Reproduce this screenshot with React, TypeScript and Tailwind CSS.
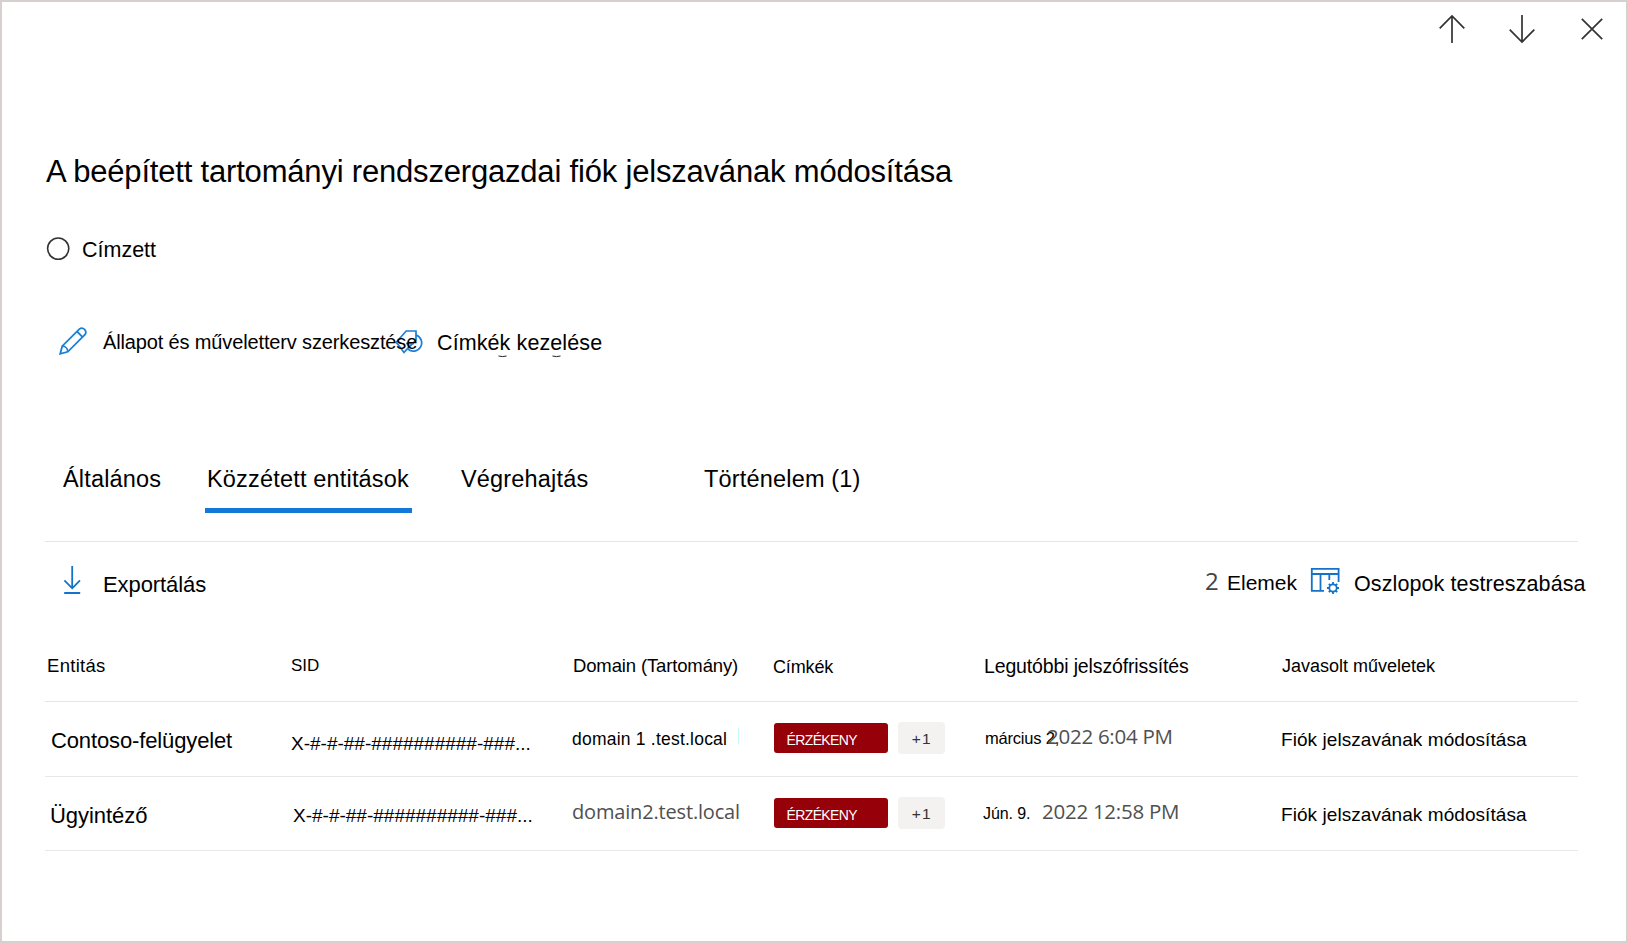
import { useState } from 'react'
import clsx from 'clsx'

interface EntityRow {
  id: number
  name: string
  nameClass: string
  sid: string
  sidClass: string
  domain: string
  domainClass: string
  marker: boolean
  day: string
  dayClass: string
  time: string
}

const rows: EntityRow[] = [
  {
    id: 1,
    name: 'Contoso-felügyelet',
    nameClass: 'pl-[6px] tracking-[-0.13px]',
    sid: 'X-#-#-##-##########-###...',
    sidClass: 'mt-[30px]',
    domain: 'domain 1 .test.local',
    domainClass: 'mt-[25px] w-[166px] text-[17.5px] tracking-[0.22px]',
    marker: true,
    day: 'március 2,',
    dayClass: 'mt-6 w-[64px] pl-[2px] text-[16.5px] tracking-[-0.2px]',
    time: '2022 6:04 PM',
  },
  {
    id: 2,
    name: 'Ügyintéző',
    nameClass: 'pl-[5px] tracking-[-0.05px]',
    sid: 'X-#-#-##-##########-###...',
    sidClass: 'mt-[27px] pl-[2px]',
    domain: 'domain2.test.local',
    domainClass: "mt-[23px] font-['Open_Sans',sans-serif] text-[20px] tracking-[-0.17px] text-[#505050]",
    marker: false,
    day: 'Jún. 9.',
    dayClass: 'mt-[25px] w-[59px] text-[16px] tracking-[-0.1px]',
    time: '2022 12:58 PM',
  },
]

const tabs = ['Általános', 'Közzétett entitások', 'Végrehajtás', 'Történelem (1)']

const columns = 'grid grid-cols-[246px_281px_201px_210px_299px_296px] leading-6'

function PencilIcon() {
  return (
    <svg className="mt-[3px] h-7 w-7" viewBox="0 0 28 28" fill="none" stroke="#1a7fd8" strokeWidth="1.8">
      <path d="M1.2 26.8 3.2 19.2 20.3 2.1a4 4 0 0 1 5.6 5.6L8.8 24.8Z" />
      <path d="m18 4.5 5.6 5.6M3.2 19.2c3.2 0 5.6 2.4 5.6 5.6" />
    </svg>
  )
}

function TagIcon() {
  return (
    <svg className="mt-[5px] h-[26px] w-7" viewBox="0 0 28 26" fill="none" stroke="#1a7fd8" strokeWidth="1.7">
      <path d="m13 19.2-4 4.3L1.3 13.2 11.2 2H21v9.2l-8 8" />
      <path d="M21 6a8.3 8.3 0 1 1-8 14.2" />
      <path d="M11 14.5h8" />
    </svg>
  )
}

function ColumnsIcon() {
  return (
    <svg className="mt-px h-[29px] w-[31px]" viewBox="0 0 31 29" fill="none" stroke="#1473c8" strokeWidth="1.8">
      <path d="M28.6 15V1.8H1.8v22H14M1.8 7h26.8M10.5 7v16.8M19.3 7v6" />
      <circle cx="23" cy="21" r="3.7" />
      <path d="M23 15v2.4M23 24.6V27M17 21h2.4M26.6 21H29M18.8 16.8l1.7 1.7M25.5 23.5l1.7 1.7M27.2 16.8l-1.7 1.7M20.5 23.5l-1.7 1.7" />
    </svg>
  )
}

export default function App() {
  const [activeTab, setActiveTab] = useState(1)

  return (
    <div className="flex h-[943px] w-[1628px] flex-col overflow-hidden border-2 border-[#d6d1ce] bg-white font-['Liberation_Sans',Arial,sans-serif] whitespace-nowrap text-black">
      {/* Panel navigation */}
      <div className="flex h-[150px] justify-end pt-3 pr-[23px]">
        <svg className="h-[30px] w-[166px]" viewBox="0 0 166 30" fill="none" stroke="#333" strokeWidth="1.7">
          <path d="M15 29V2M2.7 14.3 15 2l12.3 12.3" />
          <path d="M85 1v27M72.7 15.7 85 28l12.3-12.3" />
          <path d="m144.8 4.8 20.4 20.4M165.2 4.8l-20.4 20.4" />
        </svg>
      </div>

      <h1 className="ml-[44px] h-10 text-[31px] leading-10 tracking-[-0.19px]">
        A beépített tartományi rendszergazdai fiók jelszavának módosítása
      </h1>

      <div className="mt-[43px] flex h-[30px] pl-[44px]">
        <svg className="mt-px h-6 w-6" viewBox="0 0 24 24" fill="none" stroke="#333" strokeWidth="1.6">
          <circle cx="12.2" cy="12.6" r="10.6" />
        </svg>
        <span className="ml-[12px] text-[21.5px] leading-[30px]">Címzett</span>
      </div>

      {/* Actions */}
      <div className="mt-[59px] flex h-[34px] pl-[57px] leading-6">
        <PencilIcon />
        <span className="relative z-10 mt-[6px] ml-4 w-[292px] text-[20px] tracking-[-0.14px]">
          Állapot és műveletterv szerkesztése
        </span>
        <TagIcon />
        <span className="mt-[7px] ml-[14px] text-[21.5px] tracking-[0.1px]">
          Címkék kezelése
          <svg className="ml-[60px] h-1 w-[70px]" viewBox="0 0 70 4" fill="none" stroke="#222">
            <path d="M1.5 1q4 1.2 8 0M55.5 1q4 1.2 8 0" />
          </svg>
        </span>
      </div>

      {/* Tabs */}
      <div className="mt-[106px] grid h-[49px] grid-cols-[142px_256px_243px_auto] pl-[61px] text-[23.5px] leading-[30px] tracking-[0.18px]">
        {tabs.map((tab, i) => (
          <button
            key={tab}
            onClick={() => setActiveTab(i)}
            className={clsx(
              'flex h-[49px] items-start justify-self-start',
              i === activeTab && 'w-[207px] border-b-[5px] border-[#1379d8] pl-[2px]'
            )}
          >
            {tab}
          </button>
        ))}
      </div>

      <div className="mt-7 ml-[43px] h-px w-[1533px] shrink-0 bg-[#e4e4e4]" />

      {/* Toolbar */}
      <div className="mt-6 flex h-[86px] shrink-0 pl-[61px] leading-7">
        <svg className="h-[30px] w-[19px]" viewBox="0 0 19 30" fill="none" stroke="#1473c8" strokeWidth="1.8">
          <path d="M9.2 0v22.5M1.4 14.4l7.8 7.9 7.8-7.9M1.2 27h16" />
        </svg>
        <span className="mt-[5px] ml-[21px] w-[1102px] text-[22px] tracking-[-0.08px]">Exportálás</span>
        <span className="mt-px w-[22px] font-['Open_Sans',sans-serif] text-[24px] text-[#444]">2</span>
        <span className="mt-[3px] w-[83px] text-[21px]">Elemek</span>
        <ColumnsIcon />
        <span className="mt-[4px] ml-[13px] text-[21.5px] tracking-[0.1px]">Oszlopok testreszabása</span>
      </div>

      {/* Entities */}
      <div className="ml-[43px] w-[1533px]">
        <div className={clsx(columns, 'h-[50px] border-b border-[#e4e4e4]')}>
          <span className="mt-[2px] pl-[2px] text-[18.5px] tracking-[0.3px]">Entitás</span>
          <span className="mt-[2px] text-[17px]">SID</span>
          <span className="mt-[2px] pl-px text-[18.5px] tracking-[-0.14px]">Domain (Tartomány)</span>
          <span className="mt-[3px] text-[18px] tracking-[-0.15px]">Címkék</span>
          <span className="mt-[2px] pl-px text-[19.5px] tracking-[-0.14px]">Legutóbbi jelszófrissítés</span>
          <span className="mt-[2px] text-[18px]">Javasolt műveletek</span>
        </div>

        {rows.map((row) => (
          <div key={row.id} className={clsx(columns, 'border-b border-[#e8e8e8]', row.id === 1 ? 'h-[75px]' : 'h-[74px]')}>
            <span className={clsx('mt-[27px] text-[22px]', row.nameClass)}>{row.name}</span>
            <span className={clsx('text-[19px]', row.sidClass)}>{row.sid}</span>
            <div className="flex">
              <span className={row.domainClass}>{row.domain}</span>
              {row.marker && <span className="mt-[26px] h-4 w-px bg-[#c4f8ff]" />}
            </div>
            <div className="flex gap-[10px] pl-px">
              <span className="mt-[21px] h-[30px] w-[114px] rounded-[3px] bg-[#960009] pt-[2px] pl-[12.6px] text-[14px] leading-[30px] tracking-[-0.65px] text-white">
                ÉRZÉKENY
              </span>
              <span className="mt-5 h-8 w-[47px] rounded-[4px] bg-[#f3f2f1] pt-px pl-[13.8px] text-[15.5px] leading-8 tracking-[1.2px] text-[#333]">
                +1
              </span>
            </div>
            <div className="flex">
              <span className={clsx('shrink-0', row.dayClass)}>{row.day}</span>
              <span className="mt-[22px] font-['Open_Sans',sans-serif] text-[20.5px] tracking-[-0.26px] text-[#505050]">
                {row.time}
              </span>
            </div>
            <span className="mt-[26px] -ml-px text-[19px] tracking-[0.06px]">Fiók jelszavának módosítása</span>
          </div>
        ))}
      </div>
    </div>
  )
}
